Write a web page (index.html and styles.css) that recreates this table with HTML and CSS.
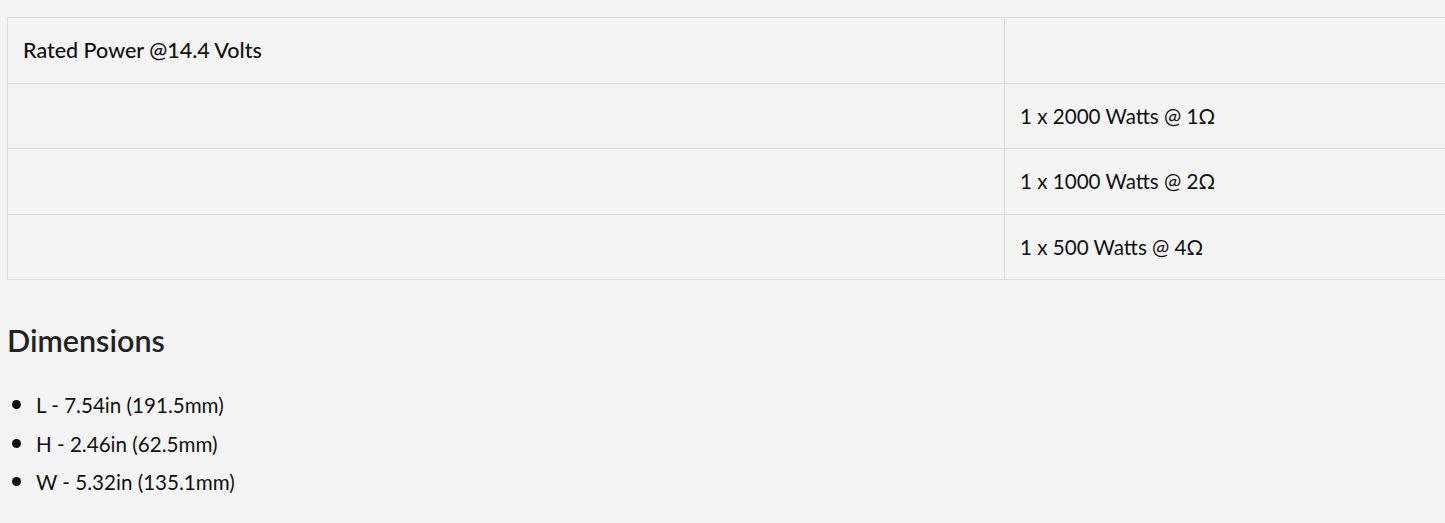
FILE: index.html
```
<!DOCTYPE html>
<html lang="en">
<head>
    <meta charset="UTF-8">
    <meta name="viewport" content="width=device-width, initial-scale=1.0">
    <title>Specifications</title>
    <link rel="stylesheet" href="styles.css">
</head>
<body>

<div class="page">
    <!-- Power table -->
    <table class="spec-table">
        <tr>
            <td class="label">Rated Power @14.4 Volts</td>
            <td></td>
        </tr>
        <tr>
            <td></td>
            <td>1 x 2000 Watts @ 1&Omega;</td>
        </tr>
        <tr>
            <td></td>
            <td>1 x 1000 Watts @ 2&Omega;</td>
        </tr>
        <tr>
            <td></td>
            <td>1 x 500 Watts @ 4&Omega;</td>
        </tr>
    </table>

    <h2>Dimensions</h2>

    <ul class="dims">
        <li>L - 7.54in (191.5mm)</li>
        <li>H - 2.46in (62.5mm)</li>
        <li>W - 5.32in (135.1mm)</li>
    </ul>
</div>

</body>
</html>
```

FILE: styles.css
```
html, body {
    overflow: hidden;
}

body {
    font-family: 'Lato', 'Helvetica Neue', Arial, sans-serif;
    background-color: #f4f4f4;
    color: #111;
    margin: 0;
    padding: 0;
}

.page {
    padding: 17px 0 0 7px;
}

.spec-table {
    width: 1500px;
    border-collapse: collapse;
    table-layout: fixed;
}

.spec-table td {
    border: 1.5px solid #dddddd;
    height: 64.5px;
    padding: 0 15px;
    font-size: 20.6px;
    text-align: left;
    vertical-align: middle;
}

.spec-table td:first-child {
    width: 966px;
}

.spec-table .label {
    font-size: 21.5px;
    font-weight: 500;
}

h2 {
    color: #222;
    font-size: 30.5px;
    font-weight: 600;
    margin: 42px 0 0 0;
}

.dims {
    margin: 26px 0 0 0;
    padding-left: 29px;
    font-size: 20.6px;
}

.dims li {
    height: 38.5px;
    line-height: 38.5px;
}

.dims li::marker {
    font-size: 26px;
}
```
